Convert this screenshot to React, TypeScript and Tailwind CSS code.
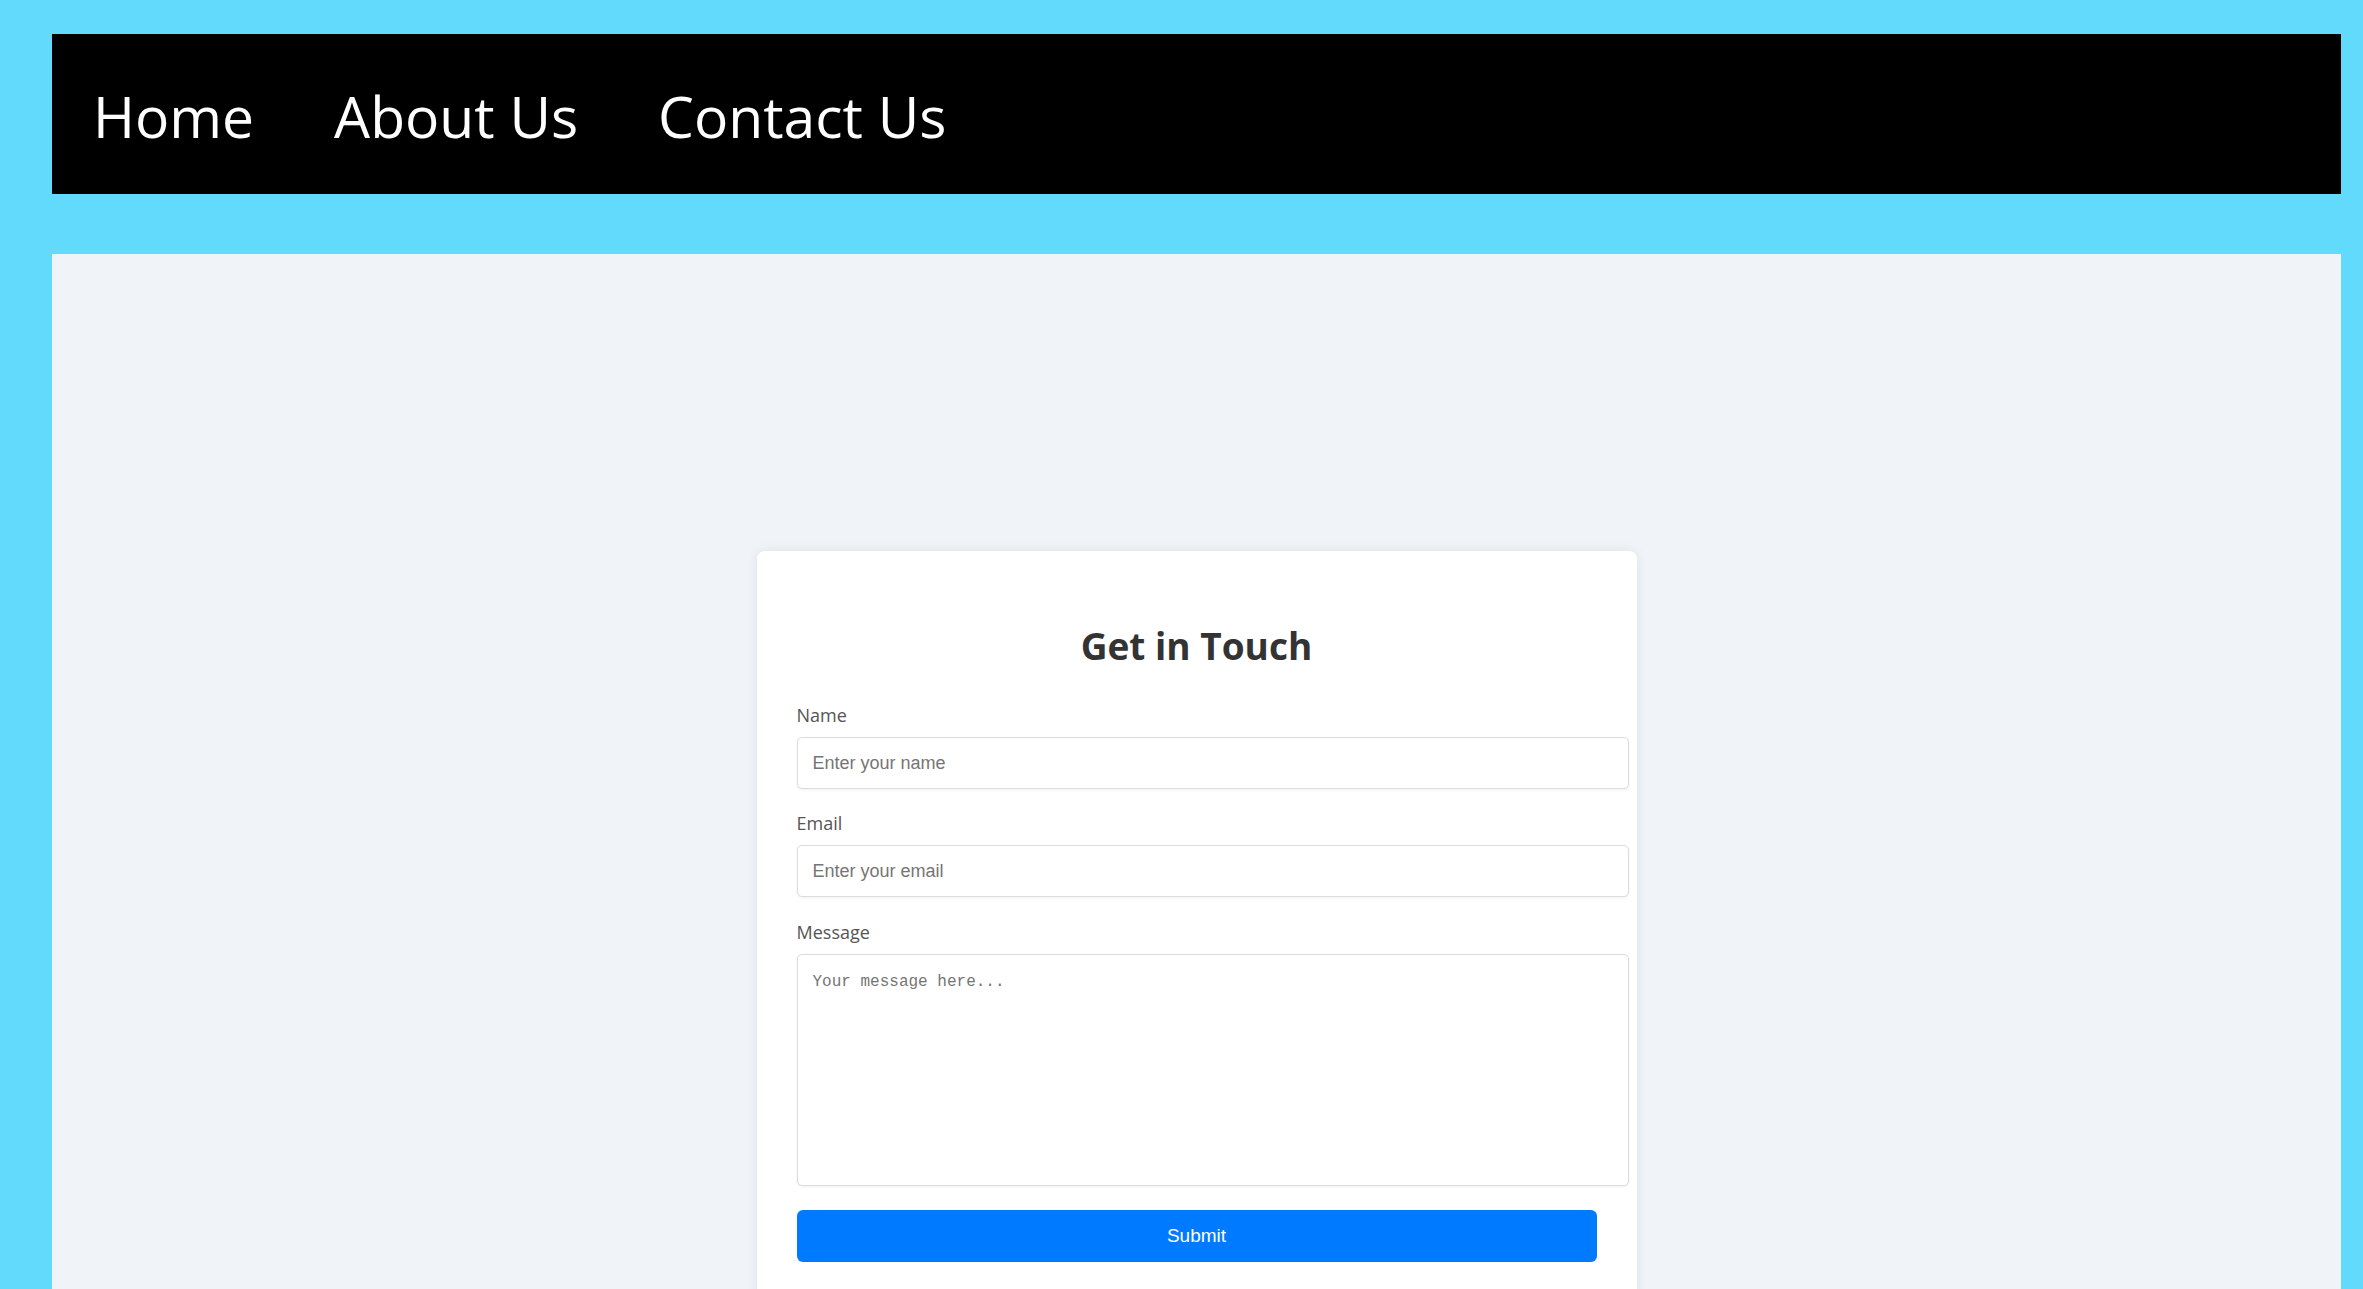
const links = ["Home", "About Us", "Contact Us"];

function Field({ id, label, placeholder, type = "text", last = false }: { id: string; label: string; placeholder: string; type?: string; last?: boolean }) {
  return (
    <div className={last ? "mb-[22px]" : "mb-[21px]"}>
      <label htmlFor={id} className="block font-['Open_Sans',sans-serif] text-[18px] leading-[26px] text-[#555] mb-[9px]">
        {label}
      </label>
      <input
        id={id}
        type={type}
        placeholder={placeholder}
        className="block w-[832px] h-[52px] px-[15px] border border-[#dcdcdc] rounded-[5px] bg-white font-['Liberation_Sans',Arial,sans-serif] text-[18px] text-[#333] placeholder:text-[#757575] outline-none shadow-[0_1px_3px_rgba(0,0,0,0.06)]"
      />
    </div>
  );
}

export default function App() {
  return (
    <div className="h-screen overflow-hidden bg-[#61dafb] pt-[34px] pl-[52px] pr-[22px]">
      <nav className="h-[160px] bg-black flex items-center gap-[80px] pl-[41px] pt-[4px]">
        {links.map((link) => (
          <a key={link} href="#" className="font-['Open_Sans',sans-serif] text-white text-[57px] leading-none">
            {link}
          </a>
        ))}
      </nav>

      <main className="mt-[60px] bg-[#f0f4f8] pt-[297px] pb-[120px]">
        <div className="mx-auto w-[880px] bg-white rounded-lg p-[40px] shadow-[0_0_12px_rgba(0,0,0,0.08)]">
          <h2 className="mt-[29px] mb-[30px] text-center font-['Open_Sans',sans-serif] text-[37px] leading-[52px] font-bold text-[#333]">
            Get in Touch
          </h2>
          <form>
            <Field id="name" label="Name" placeholder="Enter your name" />
            <Field id="email" label="Email" type="email" placeholder="Enter your email" last />
            <div className="mb-[24px]">
              <label htmlFor="message" className="block font-['Open_Sans',sans-serif] text-[18px] leading-[26px] text-[#555] mb-[9px]">
                Message
              </label>
              <textarea
                id="message"
                placeholder="Your message here..."
                className="block w-[832px] h-[232px] p-[15px] border border-[#dcdcdc] rounded-[5px] bg-white font-['Liberation_Mono','DejaVu_Sans_Mono',monospace] text-[16px] text-[#333] placeholder:text-[#757575] outline-none resize-none shadow-[0_1px_3px_rgba(0,0,0,0.06)]"
              />
            </div>
            <button type="button" className="w-full h-[52px] bg-[#007bff] text-white font-['Liberation_Sans',Arial,sans-serif] text-[19px] rounded-[6px]">
              Submit
            </button>
          </form>
        </div>
      </main>
    </div>
  );
}
